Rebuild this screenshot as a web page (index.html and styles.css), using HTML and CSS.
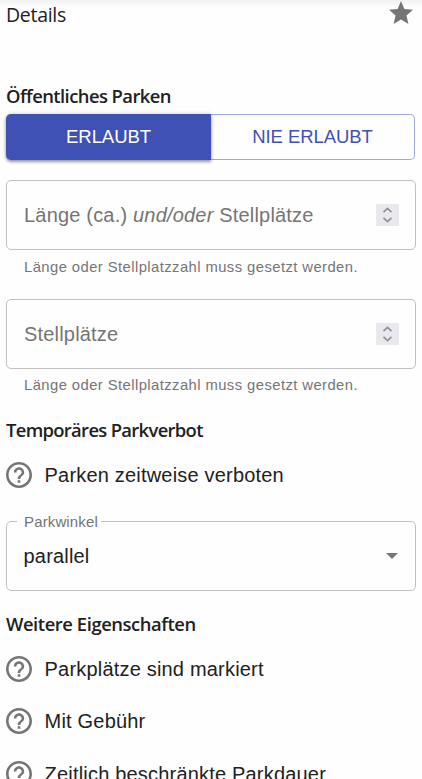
FILE: index.html
```html
<!DOCTYPE html>
<html lang="de">
<head>
<meta charset="utf-8">
<title>Details</title>
<link rel="stylesheet" href="styles.css">
</head>
<body>
<svg class="sprite" aria-hidden="true">
  <symbol id="help" viewBox="2 2 20 20"><path d="M11 18h2v-2h-2v2zm1-16C6.48 2 2 6.48 2 12s4.480 10 10 10 10-4.480 10-10S17.520 2 12 2zm0 18c-4.410 0-8-3.590-8-8s3.590-8 8-8 8 3.590 8 8-3.590 8-8 8zm0-14c-2.210 0-4 1.790-4 4h2c0-1.100.9-2 2-2s2 .9 2 2c0 2-3 1.750-3 5h2c0-2.250 3-2.500 3-5 0-2.210-1.790-4-4-4z"/></symbol>
  <symbol id="spin" viewBox="0 0 23 22"><path d="M7.500 8.200l4-3.700 4 3.700M7.500 13.800l4 3.700 4-3.700"/></symbol>
</svg>
<main class="panel">
  <header class="header">
    <span class="title">Details</span>
    <svg class="star" viewBox="2 2 20 19"><path d="M12 17.270L18.180 21l-1.640-7.030L22 9.240l-7.190-.61L12 2 9.190 8.630 2 9.240l5.460 4.730L5.820 21z"/></svg>
  </header>

  <h2 class="heading heading-public">Öffentliches Parken</h2>
  <div class="toggle">
    <button class="option selected">ERLAUBT</button>
    <button class="option">NIE ERLAUBT</button>
  </div>

  <div class="field">
    <span class="placeholder">Länge (ca.) <em>und/oder</em> Stellplätze</span>
    <svg class="spinner"><use href="#spin"/></svg>
  </div>
  <p class="helper">Länge oder Stellplatzzahl muss gesetzt werden.</p>
  <div class="field">
    <span class="placeholder">Stellplätze</span>
    <svg class="spinner"><use href="#spin"/></svg>
  </div>
  <p class="helper helper-last">Länge oder Stellplatzzahl muss gesetzt werden.</p>

  <h2 class="heading heading-temporary">Temporäres Parkverbot</h2>
  <div class="check"><svg class="help"><use href="#help"/></svg><span>Parken zeitweise verboten</span></div>

  <div class="field select">
    <span class="label">Parkwinkel</span>
    <span class="value">parallel</span>
    <svg class="arrow" viewBox="0 0 12 6"><path d="M0 0h12L6 6z"/></svg>
  </div>

  <h2 class="heading heading-more">Weitere Eigenschaften</h2>
  <div class="check"><svg class="help"><use href="#help"/></svg><span>Parkplätze sind markiert</span></div>
  <div class="check"><svg class="help"><use href="#help"/></svg><span>Mit Gebühr</span></div>
  <div class="check check-last"><svg class="help"><use href="#help"/></svg><span>Zeitlich beschränkte Parkdauer</span></div>
</main>
</body>
</html>
```
FILE: styles.css
```css
* { box-sizing: border-box; }
body {
  margin: 0;
  height: 779px;
  overflow: hidden;
  background: linear-gradient(#f1f1f1, #fefefe 7px);
  color: #212121;
  font: 20px/30px "Liberation Sans", Arial, sans-serif;
}
.sprite { position: absolute; width: 0; height: 0; }
.panel { padding: 0 6px; }
.header {
  display: flex;
  justify-content: space-between;
  height: 82px;
  padding-right: 3px;
}
.title { font: 19.5px/29px "Open Sans", sans-serif; letter-spacing: -0.3px; }
.star { width: 24px; height: 23px; margin-top: 1px; fill: #757575; }
.heading {
  margin: 0;
  height: 30px;
  font: 600 18.4px/28px "Open Sans", sans-serif;
  white-space: nowrap;
}
.heading-public { height: 32px; letter-spacing: -0.55px; }
.heading-temporary { letter-spacing: -0.67px; line-height: 29px; }
.heading-more { letter-spacing: -0.43px; }
.toggle { display: flex; width: 409px; height: 46px; margin-bottom: 20px; }
.option {
  flex: 1;
  padding: 0;
  border: 1px solid #9fa8da;
  border-left: 0;
  border-radius: 0 5px 5px 0;
  background: transparent;
  color: #3f51b5;
  font: 18.5px/44px "Liberation Sans", Arial, sans-serif;
  letter-spacing: -0.07px;
}
.selected {
  position: relative;
  flex: 0 0 205px;
  border: 0;
  border-radius: 5px 0 0 5px;
  background: #3f51b5;
  color: #fff;
  box-shadow: 0 2px 3px rgba(0, 0, 0, 0.35), 0 0 5px rgba(0, 0, 0, 0.18);
}
.field {
  position: relative;
  display: flex;
  align-items: center;
  justify-content: space-between;
  height: 70px;
  padding: 0 16px 0 17px;
  border: 1px solid #c0c0c0;
  border-radius: 5px;
}
.placeholder { color: #757575; letter-spacing: 0.19px; }
.spinner {
  width: 23px;
  height: 22px;
  background: #e9e9ed;
  fill: none;
  stroke: #8f8f9d;
  stroke-width: 1.7;
}
.helper {
  height: 20px;
  margin: 7px 0 22px 18px;
  color: #757575;
  font-size: 14.8px;
  line-height: 20px;
  letter-spacing: 0.43px;
}
.helper-last { margin: 6px 0 20px 18px; }
.check { display: flex; align-items: center; gap: 12.6px; height: 52px; letter-spacing: 0.19px; }
.help { width: 26px; height: 26px; fill: #757575; }
.heading-temporary + .check { margin-top: 4px; }
.heading-more + .check { margin-top: 3px; }
.check-last { margin-top: 1px; }
.select { margin: 20px 0 19px; }
.label {
  position: absolute;
  top: -11px;
  left: 10px;
  padding: 0 3px 0 7px;
  background: #fefefe;
  color: #757575;
  font-size: 15px;
  line-height: 22px;
  letter-spacing: 0.14px;
}
.value { margin-left: -0.5px; letter-spacing: 0.19px; }
.arrow { width: 12px; height: 6px; margin-right: 1px; fill: #757575; }
```
